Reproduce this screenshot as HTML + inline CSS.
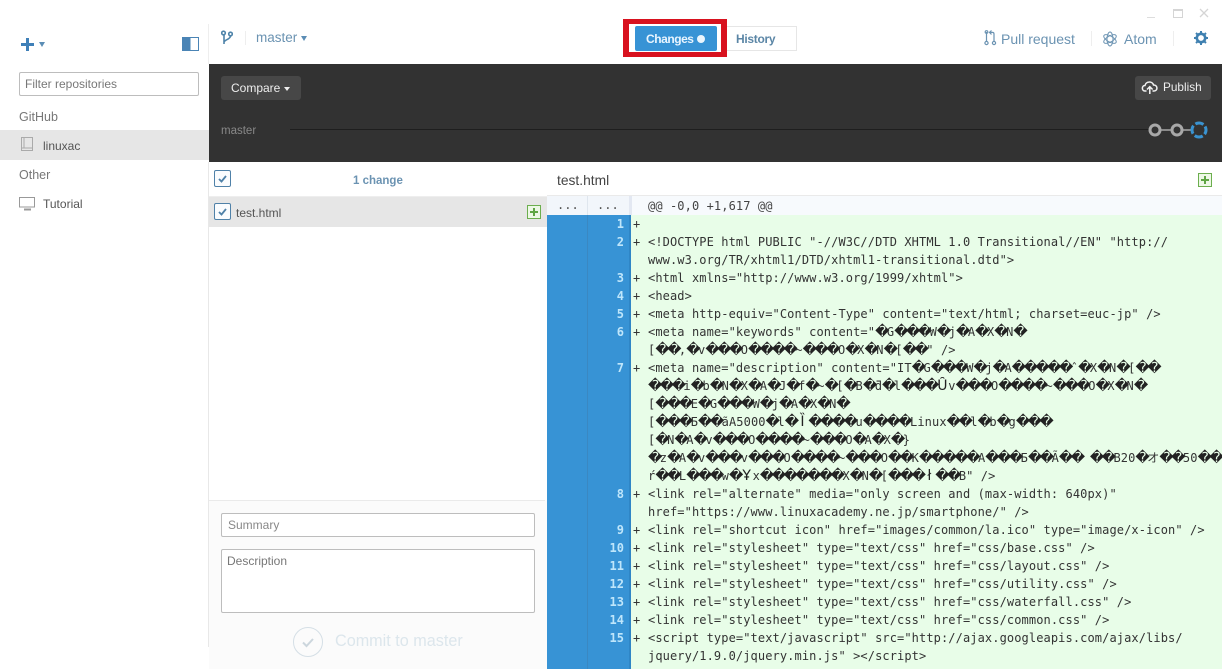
<!DOCTYPE html>
<html><head><meta charset="utf-8">
<style>
html,body{margin:0;padding:0;width:1222px;height:669px;overflow:hidden;background:#fff}
body{position:relative;font-family:"Liberation Sans",sans-serif;font-size:12.5px;color:#555}
.a{position:absolute}
.t{position:absolute;white-space:nowrap;line-height:18px}
.c{position:absolute;box-sizing:border-box;width:17px;height:17px;border:1px solid #4f81a8;border-radius:2px;background:#fafcfe}
.c svg{position:absolute;left:2px;top:2px}
.p{position:absolute;box-sizing:border-box;width:14px;height:14px;border:1px solid #6cae4e;background:#edf8e6}
.p:before{content:"";position:absolute;left:2px;top:5px;width:8px;height:2px;background:#5fa544}
.p:after{content:"";position:absolute;left:5px;top:2px;width:2px;height:8px;background:#5fa544}
.m{position:absolute;left:648px;white-space:pre;font:12px/18px "DejaVu Sans Mono",monospace;letter-spacing:.1px;color:#333}
.m i{display:inline-block;width:11.8px;text-align:center;font:14px/18px "DejaVu Sans",sans-serif;letter-spacing:0;color:#222;vertical-align:top}
.pl{position:absolute;left:633px;font:12px/18px "DejaVu Sans Mono",monospace;color:#333}
.n{position:absolute;left:588px;width:36px;text-align:right;font:bold 12px/18px "DejaVu Sans Mono",monospace;color:#bfe6fb}
</style></head><body>

<!-- sidebar -->
<div class="a" style="left:21px;top:43px;width:13px;height:3px;background:#3f80b8"></div>
<div class="a" style="left:26px;top:38px;width:3px;height:13px;background:#3f80b8"></div>
<div class="a" style="left:39px;top:42px;border-left:3.5px solid transparent;border-right:3.5px solid transparent;border-top:5px solid #5b8db5"></div>
<div class="a" style="left:182px;top:37px;width:17px;height:14px;box-sizing:border-box;border:1px solid #4a84b5;background:linear-gradient(90deg,#4a84b5 50%,#fff 50%)"></div>
<div class="a" style="left:19px;top:72px;width:180px;height:24px;box-sizing:border-box;border:1px solid #bdbdbd;border-radius:2px"></div>
<div class="t" style="left:25px;top:75px;color:#777;font-size:12px">Filter repositories</div>
<div class="t" style="left:19px;top:108px;color:#777;font-size:12.5px">GitHub</div>
<div class="a" style="left:0;top:130px;width:209px;height:30px;background:#e6e6e6"></div>
<svg class="a" style="left:20px;top:137px" width="14" height="16" fill="none" stroke="#aaa"><rect x="1.5" y="0.5" width="11" height="13"/><path d="M1.5 11h11M4 0.5v10"/></svg>
<div class="t" style="left:43px;top:137px;color:#555;font-size:12px">linuxac</div>
<div class="t" style="left:19px;top:166px;color:#777;font-size:12.5px">Other</div>
<svg class="a" style="left:19px;top:197px" width="17" height="14" fill="none" stroke="#999"><rect x="0.5" y="0.5" width="15" height="9.5"/><path d="M5 12.5h7" stroke-width="2"/></svg>
<div class="t" style="left:43px;top:195px;color:#555;font-size:12px">Tutorial</div>
<div class="a" style="left:208px;top:24px;width:1px;height:40px;background:#eee"></div>
<div class="a" style="left:208px;top:162px;width:1px;height:485px;background:#e8e8e8"></div>

<!-- top bar -->
<svg class="a" style="left:221px;top:30px" width="12" height="16" fill="none" stroke="#4f84aa" stroke-width="1.6"><circle cx="2.500" cy="3" r="1.800"/><circle cx="9.500" cy="4" r="1.800"/><path d="M3 5v9M9.500 6c0 3.500-6.500 3.500-6.500 6.500"/></svg>
<div class="a" style="left:245px;top:31px;width:1px;height:14px;background:#eee"></div>
<div class="t" style="left:256px;top:29px;font-size:13.5px;color:#6b93b2">master</div>
<div class="a" style="left:301px;top:36px;border-left:3.5px solid transparent;border-right:3.5px solid transparent;border-top:5px solid #5b8db5"></div>

<div class="a" style="left:623px;top:19px;width:104px;height:38px;background:#d8121f"></div>
<div class="a" style="left:629px;top:24px;width:92px;height:28px;background:#fff"></div>
<div class="a" style="left:635px;top:26px;width:82px;height:25px;background:#3793d5;border-radius:2px"></div>
<div class="t" style="left:646px;top:30px;color:#e9f5ff;font-weight:bold;font-size:12px;letter-spacing:-.45px">Changes</div>
<div class="a" style="left:697px;top:35px;width:8px;height:8px;border-radius:50%;background:#eaf5fd"></div>
<div class="a" style="left:727px;top:26px;width:70px;height:25px;box-sizing:border-box;border:1px solid #e6e6e6;border-left:0"></div>
<div class="t" style="left:736px;top:30px;color:#5b86a6;font-weight:bold;font-size:12px;letter-spacing:-.3px">History</div>

<svg class="a" style="left:984px;top:30px" width="13" height="16" fill="none" stroke="#6b93b2" stroke-width="1.2"><circle cx="2.500" cy="13" r="1.600"/><circle cx="10" cy="13" r="1.600"/><path d="M2.500 11V2M10 11V4c0-1-.6-1.600-1.600-1.600H6M7.500 0.500L5.500 2.400l2 2"/><circle cx="2.500" cy="2" r="1.300"/></svg>
<div class="t" style="left:1001px;top:30px;font-size:14px;color:#6b93b2">Pull request</div>
<div class="a" style="left:1091px;top:31px;width:1px;height:15px;background:#eee"></div>
<svg class="a" style="left:1102px;top:31px" width="16" height="16" fill="none" stroke="#6b93b2"><ellipse cx="8" cy="8" rx="7" ry="3" transform="rotate(30 8 8)"/><ellipse cx="8" cy="8" rx="7" ry="3" transform="rotate(90 8 8)"/><ellipse cx="8" cy="8" rx="7" ry="3" transform="rotate(150 8 8)"/></svg>
<div class="t" style="left:1124px;top:30px;font-size:14px;color:#6b93b2">Atom</div>
<div class="a" style="left:1173px;top:31px;width:1px;height:15px;background:#eee"></div>
<svg class="a" style="left:1194px;top:31px" width="14" height="14" viewBox="0 0 14 14"><circle cx="7" cy="7" r="4.200" fill="none" stroke="#3f80b0" stroke-width="2.600"/><path d="M7 0v14M0 7h14M2 2l10 10M12 2L2 12" stroke="#3f80b0" stroke-width="2" stroke-dasharray="2.400 9.500 2.400 20"/></svg>

<!-- window controls -->
<div class="a" style="left:1147px;top:17px;width:8px;height:1px;background:#ddd"></div>
<div class="a" style="left:1173px;top:9px;width:10px;height:9px;box-sizing:border-box;border:1px solid #d5d5d5;border-top:2px solid #d5d5d5"></div>
<svg class="a" style="left:1199px;top:8px" width="11" height="11" stroke="#d5d5d5" stroke-width="1.300"><path d="M1 1l8 8M9 1L1 9"/></svg>

<!-- dark band -->
<div class="a" style="left:209px;top:64px;width:1013px;height:98px;background:#323232"></div>
<div class="a" style="left:221px;top:76px;width:80px;height:24px;background:#474747;border-radius:3px"></div>
<div class="t" style="left:231px;top:79px;color:#eee;font-size:12px">Compare</div>
<div class="a" style="left:284px;top:87px;border-left:3px solid transparent;border-right:3px solid transparent;border-top:4px solid #eee"></div>
<div class="a" style="left:1135px;top:76px;width:76px;height:24px;background:#474747;border-radius:3px"></div>
<svg class="a" style="left:1141px;top:79px" width="18" height="16" fill="none" stroke="#f2f2f2" stroke-width="1.500"><path d="M5.500 12H4C0.500 12 0.500 6.500 4 6.500 5 2 11.500 2 12.500 6 17 6 17 12 13 12h-1.500"/><path d="M8.800 15V8M6 10.500l2.800-2.800 2.800 2.800"/></svg>
<div class="t" style="left:1163px;top:78px;color:#eee;font-size:11.8px">Publish</div>
<div class="t" style="left:221px;top:122px;color:#888;font-size:11.500px">master</div>
<div class="a" style="left:290px;top:129px;width:860px;height:1px;background:#1e1e1e"></div>
<svg class="a" style="left:1146px;top:120px" width="64" height="20" fill="none"><circle cx="9" cy="10" r="5" stroke="#a8a8a8" stroke-width="3"/><path d="M15 10h10M37 10h9" stroke="#a8a8a8" stroke-width="1.500"/><circle cx="31" cy="10" r="5" stroke="#a8a8a8" stroke-width="3"/><circle cx="53" cy="10" r="7" stroke="#3a93d0" stroke-width="3" stroke-dasharray="8.500 2.500" stroke-dashoffset="4"/></svg>

<!-- file list -->
<div class="c" style="left:214px;top:170px"><svg width="11" height="11" fill="none" stroke="#4f81a8" stroke-width="1.800"><path d="M2 6l2.500 2.500L9 3"/></svg></div>
<div class="t" style="left:353px;top:172px;color:#6b93b2;font-weight:bold;font-size:11.500px">1 change</div>
<div class="a" style="left:209px;top:196px;width:338px;height:1px;background:#eee"></div>
<div class="a" style="left:209px;top:197px;width:338px;height:30px;background:#e6e6e6"></div>
<div class="c" style="left:214px;top:203px"><svg width="11" height="11" fill="none" stroke="#4f81a8" stroke-width="1.800"><path d="M2 6l2.500 2.500L9 3"/></svg></div>
<div class="t" style="left:236px;top:204px;color:#555;font-size:12px">test.html</div>
<div class="p" style="left:527px;top:205px"></div>

<!-- commit -->
<div class="a" style="left:209px;top:500px;width:338px;height:169px;background:#fbfbfb"></div>
<div class="a" style="left:209px;top:500px;width:336px;height:1px;background:#eaeaea"></div>
<div class="a" style="left:221px;top:513px;width:314px;height:24px;box-sizing:border-box;border:1px solid #bdbdbd;border-radius:2px;background:#fff"></div>
<div class="t" style="left:228px;top:516px;color:#888;font-size:12px">Summary</div>
<div class="a" style="left:221px;top:549px;width:314px;height:64px;box-sizing:border-box;border:1px solid #bdbdbd;border-radius:2px;background:#fff"></div>
<div class="t" style="left:227px;top:552px;color:#777;font-size:12px">Description</div>
<svg class="a" style="left:293px;top:627px" width="30" height="30" fill="none"><circle cx="15" cy="15" r="14.500" stroke="#d5dfe6"/><path d="M10 15.500l3.500 3.500 6.500-7" stroke="#ccd6dd" stroke-width="2"/></svg>
<div class="t" style="left:335px;top:632px;color:#dce6ec;font-size:16.200px">Commit to master</div>

<!-- diff header -->
<div class="t" style="left:557px;top:172px;color:#444;font-size:13.800px">test.html</div>
<div class="p" style="left:1198px;top:173px"></div>
<div class="a" style="left:547px;top:195px;width:675px;height:1px;background:#eaeaea"></div>

<!-- diff -->
<div class="a" style="left:547px;top:196px;width:675px;height:473px;background:#e8fde8"></div>
<div class="a" style="left:547px;top:196px;width:82px;height:19px;background:#f2f6fb"></div>
<div class="a" style="left:629px;top:196px;width:593px;height:19px;background:#f7fafd"></div>
<div class="a" style="left:587px;top:196px;width:1px;height:19px;background:#dfe6ee"></div>
<div class="a" style="left:629px;top:196px;width:3px;height:19px;background:#e3e8f2"></div>
<div class="a" style="left:547px;top:215px;width:84px;height:454px;background:#3793d5"></div>
<div class="a" style="left:587px;top:215px;width:1px;height:454px;background:#3a88c2"></div>
<div class="a" style="left:629px;top:215px;width:2px;height:454px;background:#2f86c6"></div>
<div class="t" style="left:557px;top:196px;color:#555;font:12px/18px 'DejaVu Sans Mono',monospace">...</div>
<div class="t" style="left:597px;top:196px;color:#555;font:12px/18px 'DejaVu Sans Mono',monospace">...</div>
<div class="m" style="top:197px;color:#444">@@ -0,0 +1,617 @@</div>

<div class="n" style="top:215px">1</div><div class="pl" style="top:215px">+</div>
<div class="n" style="top:233px">2</div><div class="pl" style="top:233px">+</div>
<div class="m" style="top:233px">&lt;!DOCTYPE html PUBLIC "-//W3C//DTD XHTML 1.0 Transitional//EN" "http://</div>
<div class="m" style="top:251px">www.w3.org/TR/xhtml1/DTD/xhtml1-transitional.dtd"&gt;</div>
<div class="n" style="top:269px">3</div><div class="pl" style="top:269px">+</div>
<div class="m" style="top:269px">&lt;html xmlns="http://www.w3.org/1999/xhtml"&gt;</div>
<div class="n" style="top:287px">4</div><div class="pl" style="top:287px">+</div>
<div class="m" style="top:287px">&lt;head&gt;</div>
<div class="n" style="top:305px">5</div><div class="pl" style="top:305px">+</div>
<div class="m" style="top:305px">&lt;meta http-equiv="Content-Type" content="text/html; charset=euc-jp" /&gt;</div>
<div class="n" style="top:323px">6</div><div class="pl" style="top:323px">+</div>
<div class="m" style="top:323px">&lt;meta name="keywords" content="<i>�</i>G<i>�</i><i>�</i><i>�</i>W<i>�</i>j<i>�</i>A<i>�</i>X<i>�</i>N<i>�</i></div>
<div class="m" style="top:341px">[<i>�</i><i>�</i>,<i>�</i>v<i>�</i><i>�</i><i>�</i>O<i>�</i><i>�</i><i>�</i><i>�</i>~<i>�</i><i>�</i><i>�</i>O<i>�</i>X<i>�</i>N<i>�</i>[<i>�</i><i>�</i>" /&gt;</div>
<div class="n" style="top:359px">7</div><div class="pl" style="top:359px">+</div>
<div class="m" style="top:359px">&lt;meta name="description" content="IT<i>�</i>G<i>�</i><i>�</i><i>�</i>W<i>�</i>j<i>�</i>A<i>�</i><i>�</i><i>�</i><i>�</i><i>�</i>ˆ<i>�</i>X<i>�</i>N<i>�</i>[<i>�</i><i>�</i></div>
<div class="m" style="top:377px"><i>�</i><i>�</i><i>�</i>i<i>�</i>b<i>�</i>N<i>�</i>X<i>�</i>A<i>�</i>J<i>�</i>f<i>�</i>~<i>�</i>[<i>�</i>B<i>�</i>ƌ<i>�</i>l<i>�</i><i>�</i><i>�</i><i>Ȗ</i>v<i>�</i><i>�</i><i>�</i>O<i>�</i><i>�</i><i>�</i><i>�</i>~<i>�</i><i>�</i><i>�</i>O<i>�</i>X<i>�</i>N<i>�</i></div>
<div class="m" style="top:395px">[<i>�</i><i>�</i><i>�</i>E<i>�</i>G<i>�</i><i>�</i><i>�</i>W<i>�</i>j<i>�</i>A<i>�</i>X<i>�</i>N<i>�</i></div>
<div class="m" style="top:413px">[<i>�</i><i>�</i><i>�</i>Б<i>�</i><i>�</i>ãA5000<i>�</i>l<i>�</i><i>Ȉ</i><i>�</i><i>�</i><i>�</i><i>�</i>u<i>�</i><i>�</i><i>�</i><i>�</i>Linux<i>�</i><i>�</i>l<i>�</i>b<i>�</i>g<i>�</i><i>�</i><i>�</i></div>
<div class="m" style="top:431px">[<i>�</i>N<i>�</i>A<i>�</i>v<i>�</i><i>�</i><i>�</i>O<i>�</i><i>�</i><i>�</i><i>�</i>~<i>�</i><i>�</i><i>�</i>O<i>�</i>A<i>�</i>X<i>�</i>}</div>
<div class="m" style="top:449px"><i>�</i>z<i>�</i>A<i>�</i>v<i>�</i><i>�</i><i>�</i>v<i>�</i><i>�</i><i>�</i>O<i>�</i><i>�</i><i>�</i><i>�</i>~<i>�</i><i>�</i><i>�</i>O<i>�</i><i>�</i>K<i>�</i><i>�</i><i>�</i><i>�</i><i>�</i>A<i>�</i><i>�</i><i>�</i>Б<i>�</i><i>�</i>Ã<i>�</i><i>�</i> <i>�</i><i>�</i>B20<i>�</i>オ<i>�</i><i>�</i>50<i>�</i><i>�</i></div>
<div class="m" style="top:467px">ŕ<i>�</i><i>�</i>L<i>�</i><i>�</i><i>�</i>w<i>�</i><i>Ұ</i>x<i>�</i><i>�</i><i>�</i><i>�</i><i>�</i><i>�</i><i>�</i>X<i>�</i>N<i>�</i>[<i>�</i><i>�</i><i>�</i><i>ł</i><i>�</i><i>�</i>B" /&gt;</div>
<div class="n" style="top:485px">8</div><div class="pl" style="top:485px">+</div>
<div class="m" style="top:485px">&lt;link rel="alternate" media="only screen and (max-width: 640px)"</div>
<div class="m" style="top:503px">href="https://www.linuxacademy.ne.jp/smartphone/" /&gt;</div>
<div class="n" style="top:521px">9</div><div class="pl" style="top:521px">+</div>
<div class="m" style="top:521px">&lt;link rel="shortcut icon" href="images/common/la.ico" type="image/x-icon" /&gt;</div>
<div class="n" style="top:539px">10</div><div class="pl" style="top:539px">+</div>
<div class="m" style="top:539px">&lt;link rel="stylesheet" type="text/css" href="css/base.css" /&gt;</div>
<div class="n" style="top:557px">11</div><div class="pl" style="top:557px">+</div>
<div class="m" style="top:557px">&lt;link rel="stylesheet" type="text/css" href="css/layout.css" /&gt;</div>
<div class="n" style="top:575px">12</div><div class="pl" style="top:575px">+</div>
<div class="m" style="top:575px">&lt;link rel="stylesheet" type="text/css" href="css/utility.css" /&gt;</div>
<div class="n" style="top:593px">13</div><div class="pl" style="top:593px">+</div>
<div class="m" style="top:593px">&lt;link rel="stylesheet" type="text/css" href="css/waterfall.css" /&gt;</div>
<div class="n" style="top:611px">14</div><div class="pl" style="top:611px">+</div>
<div class="m" style="top:611px">&lt;link rel="stylesheet" type="text/css" href="css/common.css" /&gt;</div>
<div class="n" style="top:629px">15</div><div class="pl" style="top:629px">+</div>
<div class="m" style="top:629px">&lt;script type="text/javascript" src="http://ajax.googleapis.com/ajax/libs/</div>
<div class="m" style="top:647px">jquery/1.9.0/jquery.min.js" &gt;&lt;/script&gt;</div>
</body></html>
